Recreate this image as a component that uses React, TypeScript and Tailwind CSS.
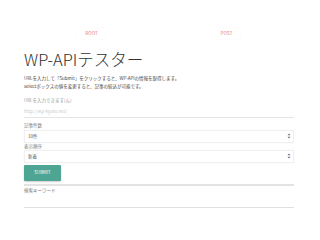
const font = { fontFamily: '"Noto Sans CJK JP", "Noto Sans", sans-serif' };

const Chevron = () => (
  <svg width="4" height="6" viewBox="0 0 4 6" className="text-gray-500">
    <path d="M2 0.5 L3.5 2.2 H0.5 Z M2 5.5 L3.5 3.8 H0.5 Z" fill="currentColor" />
  </svg>
);

const SelectBox = ({ value }: { value: string }) => (
  <div className="flex h-[13px] items-center justify-between border border-[#f0f0f0] pl-[3px] pr-[2px] text-[4.5px] text-[#555] shadow-[0_0_1px_rgba(0,0,0,0.08)]">
    <span>{value}</span>
    <Chevron />
  </div>
);

const App = () => {
  return (
    <div className="h-[240px] w-[320px] bg-white" style={font}>
      <div className="ml-[24px] w-[270px] pt-[28px]">
        <div className="flex">
          <div className="flex flex-1 justify-center">
            <div className="rounded-[2px] px-[8px] py-[2px] text-[4.5px] tracking-wide text-[#e57373] shadow-[0_0_2px_rgba(0,0,0,0.06)]">
              ROOT
            </div>
          </div>
          <div className="flex flex-1 justify-center">
            <div className="rounded-[2px] px-[8px] py-[2px] text-[4.5px] tracking-wide text-[#e57373] shadow-[0_0_2px_rgba(0,0,0,0.06)]">
              POST
            </div>
          </div>
        </div>

        <h1 className="mt-[10px] text-[16.5px] font-light leading-[20px] text-[#333]">WP-APIテスター</h1>

        <div className="mt-[5px] text-[4.5px] leading-[8px] text-[#444]">
          <p>URLを入力して「Submit」をクリックすると、WP-APIの情報を取得します。</p>
          <p>selectボックスの値を変更すると、記事の絞込が可能です。</p>
        </div>

        <div className="mt-[7px] text-[4.5px] leading-[6px] text-[#999]">URLを入力できます(ん)</div>
        <div className="mt-[5px] border-b border-[#e5e5e5] pb-[3px] text-[4.5px] leading-[6px] text-[#ccc]">
          http://wp-kyoto.net/
        </div>

        <div className="mt-[4px] text-[4.5px] leading-[6px] text-[#777]">記事件数</div>
        <div className="mt-[2px]">
          <SelectBox value="10件" />
        </div>

        <div className="text-[4.5px] leading-[6px] text-[#777]">表示順序</div>
        <div className="mt-[1px]">
          <SelectBox value="新着" />
        </div>

        <button className="mt-[2px] flex h-[16px] w-[37px] items-center justify-center rounded-[1px] bg-[#4ea593] text-[4.5px] text-white shadow-[0_1px_2px_rgba(0,0,0,0.2)]">
          SUBMIT
        </button>

        <div className="mt-[3px] h-[2px] bg-[#e3e3e3]" />
        <div className="mt-[1px] text-[4.5px] leading-[6px] text-[#777]">検索キーワード</div>
        <div className="mt-[14px] h-px bg-[#e0e0e0]" />
      </div>
    </div>
  );
};

export default App;
